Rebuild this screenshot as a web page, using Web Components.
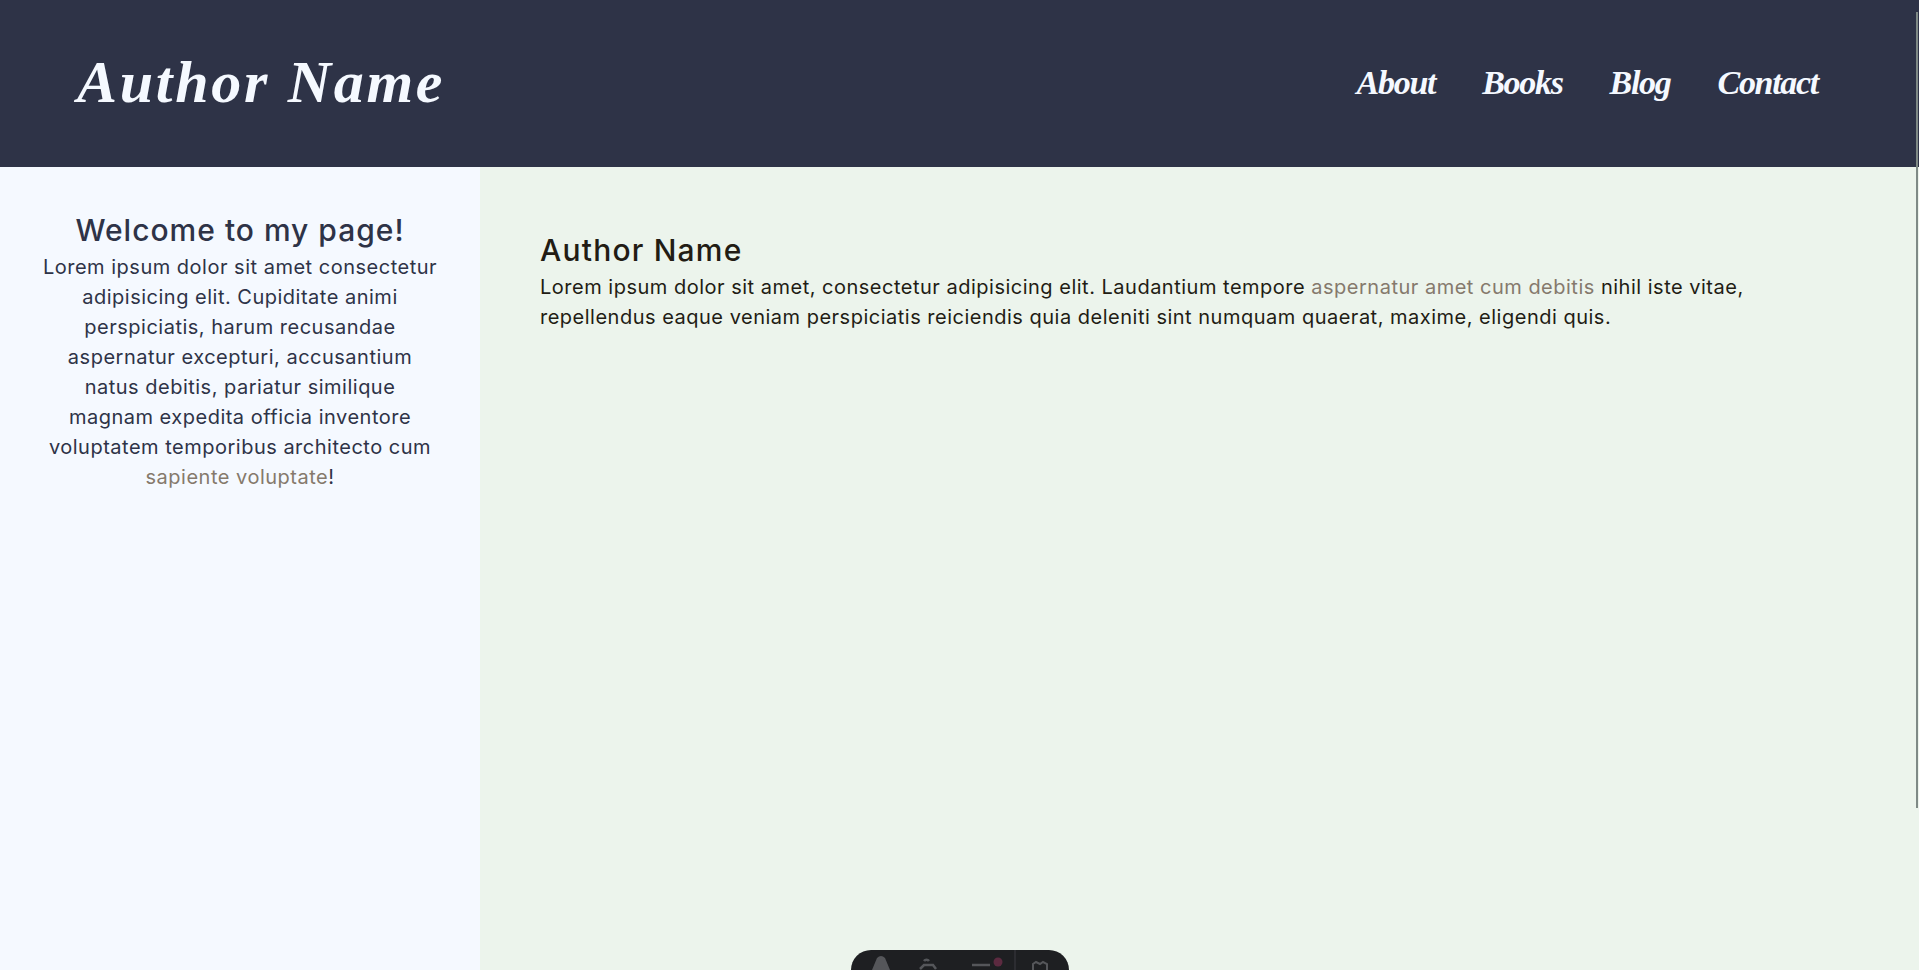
<!DOCTYPE html>
<html lang="en">
<head>
<meta charset="utf-8">
<title>Author Name</title>
<style>
  html, body { margin: 0; height: 100%; overflow: hidden; }
  body { font-family: "Inter", "Liberation Sans", sans-serif; }
</style>
</head>
<body>
<author-page>
  <site-header slot="header" name="Author Name">
    <nav-link>About</nav-link>
    <nav-link>Books</nav-link>
    <nav-link>Blog</nav-link>
    <nav-link>Contact</nav-link>
  </site-header>
  <side-panel slot="side" title="Welcome to my page!">
    Lorem ipsum dolor sit amet consectetur<br>adipisicing elit. Cupiditate animi<br>perspiciatis, harum recusandae<br>aspernatur excepturi, accusantium<br>natus debitis, pariatur similique<br>magnam expedita officia inventore<br>voluptatem temporibus architecto cum<br><text-link>sapiente voluptate</text-link>!
  </side-panel>
  <main-panel slot="main" title="Author Name">
    Lorem ipsum dolor sit amet, consectetur adipisicing elit. Laudantium tempore <text-link>aspernatur amet cum debitis</text-link> nihil iste vitae,<br>repellendus eaque veniam perspiciatis reiciendis quia deleniti sint numquam quaerat, maxime, eligendi quis.
  </main-panel>
</author-page>
<dev-toolbar></dev-toolbar>
<script>
class AuthorPage extends HTMLElement {
  constructor() {
    super();
    this.attachShadow({ mode: "open" });
    this.shadowRoot.innerHTML = `
    <style>
      :host { display: grid; height: 970px; grid-template-rows: 167px 1fr; grid-template-columns: 480px 1fr; position: relative; overflow: hidden; }
      .top { grid-column: 1 / 3; }
      .bar { position: absolute; right: 1px; top: 12px; width: 2px; height: 796px; background: #7f8a86; }
    </style>
    <div class="top"><slot name="header"></slot></div>
    <slot name="side"></slot>
    <slot name="main"></slot>
    <div class="bar"></div>`;
  }
}

class SiteHeader extends HTMLElement {
  constructor() {
    super();
    this.attachShadow({ mode: "open" });
  }
  connectedCallback() {
    this.shadowRoot.innerHTML = `
    <style>
      :host { display: flex; height: 167px; box-sizing: border-box; align-items: center; justify-content: space-between; padding: 0 101px 2px 77px; background: #2e3347; }
      .logo { font: italic bold 60px "Liberation Serif", serif; color: #f5f9ff; letter-spacing: 2.7px; }
      nav { display: flex; gap: 47px; }
    </style>
    <div class="logo">${this.getAttribute("name")}</div>
    <nav><slot></slot></nav>`;
  }
}

class NavLink extends HTMLElement {
  constructor() {
    super();
    this.attachShadow({ mode: "open" });
    this.shadowRoot.innerHTML = `
    <style>
      :host { display: block; font: italic bold 34px "Liberation Serif", serif; color: #f5f9ff; letter-spacing: -1.3px; }
    </style>
    <slot></slot>`;
  }
}

class TextLink extends HTMLElement {
  constructor() {
    super();
    this.attachShadow({ mode: "open" });
    this.shadowRoot.innerHTML = `
    <style>:host { display: inline; color: #85796c; }</style>
    <slot></slot>`;
  }
}

class SidePanel extends HTMLElement {
  constructor() {
    super();
    this.attachShadow({ mode: "open" });
  }
  connectedCallback() {
    this.shadowRoot.innerHTML = `
    <style>
      :host { display: block; box-sizing: border-box; padding: 42px 20px 0; background: #f5f9ff; color: #2e3347; text-align: center; font: 20px/30px "Inter", sans-serif; letter-spacing: 0.5px; }
      h2 { margin: 0; font: 500 30px/43px "Inter", sans-serif; letter-spacing: 1px; }
    </style>
    <h2>${this.getAttribute("title")}</h2>
    <slot></slot>`;
  }
}

class MainPanel extends HTMLElement {
  constructor() {
    super();
    this.attachShadow({ mode: "open" });
  }
  connectedCallback() {
    this.shadowRoot.innerHTML = `
    <style>
      :host { display: block; box-sizing: border-box; padding: 62px 60px 0; background: #ecf4ec; color: #221c14; font: 20px/30px "Inter", sans-serif; letter-spacing: 0.5px; }
      h2 { margin: 0; font: 500 30px/43px "Inter", sans-serif; letter-spacing: 1.2px; }
    </style>
    <h2>${this.getAttribute("title")}</h2>
    <slot></slot>`;
  }
}

class DevToolbar extends HTMLElement {
  constructor() {
    super();
    this.attachShadow({ mode: "open" });
    this.shadowRoot.innerHTML = `
    <style>
      :host { position: fixed; left: 851px; top: 950px; width: 218px; height: 40px; background: #1e1f22; border-radius: 20px; display: flex; overflow: hidden; }
      svg { display: block; }
    </style>
    <svg width="218" height="40" fill="none" stroke="#55565a" stroke-width="2">
      <path d="M21 20 L26 8 Q30 4 34 8 L39 20Z" fill="#55565a" stroke="none"/>
      <path d="M73 11a3 3 0 0 1 5 0M69 19l4-4h9l3 4" stroke-width="2.5"/>
      <path d="M121 15h18" stroke-width="2.5"/>
      <circle cx="147" cy="12" r="4.5" fill="#5c2a40" stroke="none"/>
      <path d="M164 0v40" stroke="#3a3b40" stroke-width="1"/>
      <path d="M182 20v-6l3-2 4 2 3-2 4 2v6"/>
    </svg>`;
  }
}

customElements.define("author-page", AuthorPage);
customElements.define("site-header", SiteHeader);
customElements.define("nav-link", NavLink);
customElements.define("text-link", TextLink);
customElements.define("side-panel", SidePanel);
customElements.define("main-panel", MainPanel);
customElements.define("dev-toolbar", DevToolbar);
</script>
</body>
</html>
